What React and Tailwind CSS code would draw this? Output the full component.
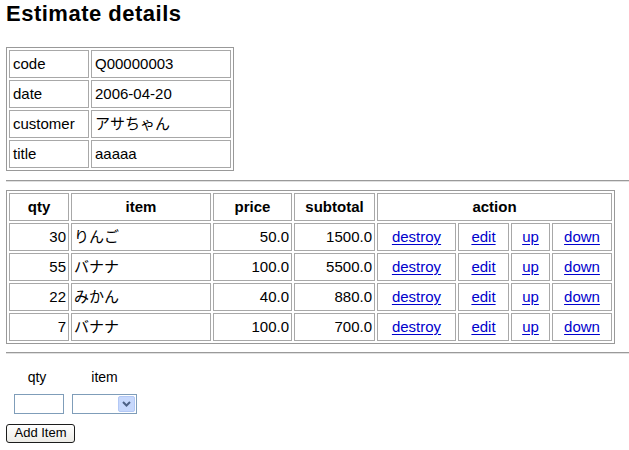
import React from "react";

const font = { fontFamily: '"Liberation Sans", "Noto Sans CJK JP", sans-serif' };

const cell = "border border-[#a8a8a8] px-[2px] p-0 align-middle";

function Link({ children }) {
  return <a href="#" className="text-[#0000cc] underline underline-offset-[2px]">{children}</a>;
}

const details = [
  ["code", "Q00000003"],
  ["date", "2006-04-20"],
  ["customer", "アサちゃん"],
  ["title", "aaaaa"],
];

const items = [
  [30, "りんご", "50.0", "1500.0"],
  [55, "バナナ", "100.0", "5500.0"],
  [22, "みかん", "40.0", "880.0"],
  [7, "バナナ", "100.0", "700.0"],
];

const colWidths = [60, 140, 79, 81, 79, 51, 39, 60];

export default function App() {
  return (
    <div className="w-[629px] h-[450px] bg-white text-black text-[15px] overflow-hidden" style={font}>
      <div className="pl-[6px]">
        <h1 className="text-[22px] font-bold leading-[24px] pt-[2px] tracking-[0.5px]">Estimate details</h1>
        <table className="mt-[21px] border-separate border-spacing-[2px] border border-[#999] table-fixed w-[228px] leading-[18px]">
          <colgroup>
            <col className="w-[80px]" />
            <col className="w-[140px]" />
          </colgroup>
          <tbody>
            {details.map(([k, v]) => (
              <tr key={k}>
                <td className={cell + " h-[28px] pl-[3px]"}>{k}</td>
                <td className={cell + " h-[28px] pl-[3px]"}>{v}</td>
              </tr>
            ))}
          </tbody>
        </table>
      </div>
      <div className="ml-[6px] mt-[9px] h-[2px] border-t border-[#9a9a9a] border-b border-b-[#e0e0e0]" />
      <div className="pl-[6px] mt-[8px]">
        <table className="border-separate border-spacing-[2px] border border-[#999] table-fixed w-[609px] leading-[18px]">
          <colgroup>
            {colWidths.map((w, i) => (
              <col key={i} style={{ width: w }} />
            ))}
          </colgroup>
          <thead>
            <tr>
              <th className={cell + " h-[28px] font-bold"}>qty</th>
              <th className={cell + " h-[28px] font-bold"}>item</th>
              <th className={cell + " h-[28px] font-bold"}>price</th>
              <th className={cell + " h-[28px] font-bold"}>subtotal</th>
              <th className={cell + " h-[28px] font-bold"} colSpan={4}>action</th>
            </tr>
          </thead>
          <tbody>
            {items.map(([q, name, price, sub], i) => (
              <tr key={i}>
                <td className={cell + " h-[28px] text-right pr-[2px]"}>{q}</td>
                <td className={cell + " h-[28px] pl-[2px]"}>{name}</td>
                <td className={cell + " h-[28px] text-right pr-[2px]"}>{price}</td>
                <td className={cell + " h-[28px] text-right pr-[2px]"}>{sub}</td>
                <td className={cell + " h-[28px] text-center"}><Link>destroy</Link></td>
                <td className={cell + " h-[28px] text-center"}><Link>edit</Link></td>
                <td className={cell + " h-[28px] text-center"}><Link>up</Link></td>
                <td className={cell + " h-[28px] text-center"}><Link>down</Link></td>
              </tr>
            ))}
          </tbody>
        </table>
      </div>
      <div className="ml-[6px] mt-[8px] h-[2px] border-t border-[#9a9a9a] border-b border-b-[#e0e0e0]" />
      <div className="pl-[14px] mt-[15px] flex gap-[8px] text-[14px]">
        <div className="flex flex-col items-center w-[50px]">
          <span className="leading-[16px] mr-[4px]">qty</span>
          <input className="mt-[9px] w-[50px] h-[20px] border border-[#7f9db9] bg-white outline-none" />
        </div>
        <div className="flex flex-col items-center w-[65px]">
          <span className="leading-[16px]">item</span>
          <div className="mt-[9px] w-[65px] h-[20px] border border-[#7f9db9] bg-white flex justify-end items-center p-[1px]">
            <div className="w-[17px] h-[16px] bg-[#c7d8fc] border border-[#b3c8f5] rounded-[2px] flex items-center justify-center">
              <svg width="9" height="6" viewBox="0 0 9 6"><path d="M1 1 L4.5 4.5 L8 1" stroke="#4d6185" strokeWidth="2" fill="none" /></svg>
            </div>
          </div>
        </div>
      </div>
      <div className="pl-[6px] mt-[7px]">
        <button className="w-[69px] h-[19px] border border-[#1c1c1c] rounded-[3px] bg-gradient-to-b from-white to-[#ecebe6] text-[13px] leading-[16px] text-black">Add Item</button>
      </div>
    </div>
  );
}
